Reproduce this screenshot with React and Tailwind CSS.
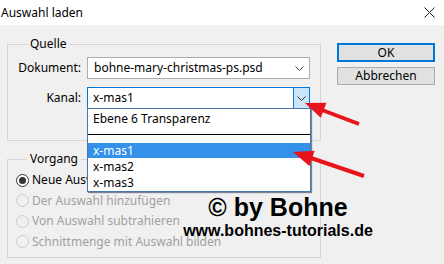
import React from "react";

const radios = [
  { label: "Neue Auswahl", checked: true, disabled: false },
  { label: "Der Auswahl hinzufügen", checked: false, disabled: true },
  { label: "Von Auswahl subtrahieren", checked: false, disabled: true },
  { label: "Schnittmenge mit Auswahl bilden", checked: false, disabled: true },
];

function Chevron({ color = "#444" }) {
  return (
    <svg width="9" height="5" viewBox="0 0 9 5">
      <polyline points="0.5,0.5 4.5,4.5 8.5,0.5" fill="none" stroke={color} strokeWidth="1" />
    </svg>
  );
}

function Radio({ checked, disabled }) {
  return (
    <span
      className={`flex h-[13px] w-[13px] shrink-0 items-center justify-center rounded-full border ${
        disabled ? "border-[#cccccc] bg-[#f0f0f0]" : "border-[#333] bg-white"
      }`}
    >
      {checked && <span className="h-[7px] w-[7px] rounded-full bg-[#333]" />}
    </span>
  );
}

export default function App() {
  return (
    <div
      className="relative h-[264px] w-[444px] overflow-hidden bg-[#f0f0f0] text-[12px] text-black"
      style={{ fontFamily: '"Noto Sans", "DejaVu Sans", sans-serif' }}
    >
      {/* title bar */}
      <div className="flex h-[25px] items-center justify-between bg-white pl-[1px] pr-[8px]">
        <span className="leading-[14px]">Auswahl laden</span>
        <svg width="11" height="11" viewBox="0 0 11 11" className="mr-[1px]">
          <path d="M0.5 0.5 L10.5 10.5 M10.5 0.5 L0.5 10.5" stroke="#222" strokeWidth="1" />
        </svg>
      </div>

      <div className="flex">
        <div className="ml-[7px] flex flex-col">
          {/* Quelle */}
          <fieldset className="mt-[12px] h-[104px] w-[314px] border border-[#d5d5d5]">
            <legend className="ml-[19px] px-[3px] leading-[14px]">Quelle</legend>
            <div className="flex flex-col gap-[8px] pt-[6px]">
              <div className="flex items-center">
                <span className="w-[74px] pr-[1px] text-right">Dokument:</span>
                <div className="ml-[5px] flex h-[22px] w-[223px] items-center justify-between border border-[#adadad] bg-white pl-[6px] pr-[5px]">
                  <span>bohne-mary-christmas-ps.psd</span>
                  <Chevron />
                </div>
              </div>
              <div className="flex items-center">
                <span className="w-[74px] pr-[1px] text-right">Kanal:</span>
                <div className="relative ml-[5px] flex h-[22px] w-[223px] items-center border border-[#0078d7] bg-white">
                  <span className="flex-1 pl-[5px]">x-mas1</span>
                  <span className="flex h-full w-[16px] items-center justify-center border-l border-[#0078d7] bg-[#cce4f7]">
                    <Chevron color="#333" />
                  </span>
                  {/* open list */}
                  <div className="absolute left-[-1px] top-[20px] z-10 flex h-[84px] w-[224px] flex-col border border-[#4a78a8] bg-white leading-[15px] shadow-[1px_1px_1px_rgba(40,60,90,0.6)]">
                    <div className="flex h-[18px] items-center pl-[5px]">Ebene 6 Transparenz</div>
                    <div className="h-[7px]" />
                    <div className="h-[1px] bg-black" />
                    <div className="h-[8px]" />
                    <div className="flex h-[15px] items-center bg-[#3391ea] pl-[5px] text-white">x-mas1</div>
                    <div className="flex h-[16px] items-center pl-[5px]">x-mas2</div>
                    <div className="flex h-[16px] items-center pl-[5px]">x-mas3</div>
                  </div>
                </div>
              </div>
            </div>
          </fieldset>

          {/* Vorgang */}
          <fieldset className="mt-[11px] h-[106px] w-[314px] border border-[#d5d5d5]">
            <legend className="ml-[19px] px-[3px] leading-[14px]">Vorgang</legend>
            <div className="flex flex-col pl-[8px] pt-[4px]">
              {radios.map((r) => (
                <div key={r.label} className="flex h-[20.5px] items-center gap-[3px]">
                  <Radio checked={r.checked} disabled={r.disabled} />
                  <span className={r.disabled ? "text-[#a0a0a0]" : ""}>{r.label}</span>
                </div>
              ))}
            </div>
          </fieldset>
        </div>

        {/* buttons */}
        <div className="ml-[16px] flex flex-col gap-[5px] pt-[18px]">
          <button className="flex h-[19px] w-[98px] items-center justify-center border-2 border-[#0078d7] bg-[#e1e1e1] leading-none">
            OK
          </button>
          <button className="flex h-[18px] w-[98px] items-center justify-center border border-[#adadad] bg-[#e1e1e1] leading-none">
            Abbrechen
          </button>
        </div>
      </div>

      {/* watermark */}
      <div
        className="absolute left-[183px] top-[195px] z-20 flex w-[190px] flex-col items-center font-bold leading-none"
        style={{ fontFamily: '"Liberation Sans", Arial, sans-serif' }}
      >
        <span className="text-[25px]">© by Bohne</span>
        <span className="mt-[3px] text-[16px]">www.bohnes-tutorials.de</span>
      </div>

      {/* red arrows */}
      <svg className="absolute left-0 top-0 z-30" width="444" height="264" viewBox="0 0 444 264">
        <line x1="359" y1="124" x2="322" y2="110" stroke="#e8141b" strokeWidth="4" />
        <polygon points="305,103 326.5,102.8 320.7,117.8" fill="#e8141b" />
        <line x1="364" y1="176" x2="311" y2="158" stroke="#e8141b" strokeWidth="4" />
        <polygon points="293,152 314.6,150.8 309.4,166" fill="#e8141b" />
      </svg>
    </div>
  );
}
